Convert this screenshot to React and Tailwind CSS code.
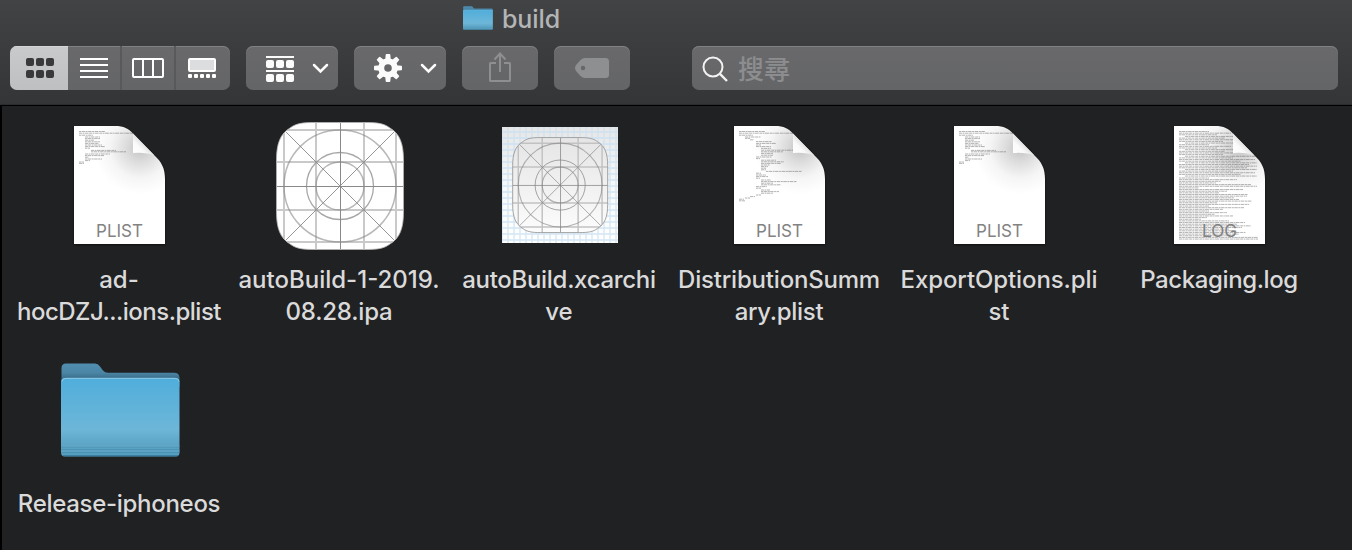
import React from "react";

const BUTTON =
  "h-11 shrink-0 rounded-[7px] bg-linear-to-b from-[#69696b] to-[#646567] shadow-[inset_0_1px_0_#808183]";

function FolderIcon({ className, id }) {
  return (
    <svg viewBox="0 0 119 94" preserveAspectRatio="none" className={className}>
      <defs>
        <linearGradient id={id + "f"} x1="0" y1="0" x2="0" y2="1">
          <stop offset="0" stopColor="#50aedb" />
          <stop offset="0.66" stopColor="#6db6d8" />
          <stop offset="0.86" stopColor="#5ca3c4" />
          <stop offset="1" stopColor="#539dbf" />
        </linearGradient>
        <linearGradient id={id + "b"} x1="0" y1="0" x2="0" y2="1">
          <stop offset="0" stopColor="#508eb0" />
          <stop offset="0.4" stopColor="#4a85a5" />
          <stop offset="0.62" stopColor="#3c6f8b" />
        </linearGradient>
      </defs>
      <path d="M0.5 22V5Q0.5 0.5 5 0.5H34Q37 0.5 39 3.500L42 7.500Q44 9.700 47 9.700H113Q118.500 9.700 118.500 15V24Z" fill={`url(#${id}b)`} />
      <rect x="0" y="15" width="118.500" height="78.500" rx="4" fill={`url(#${id}f)`} />
      <path d="M1 18.500Q1.500 15.300 5 15.300H114Q117.500 15.300 118 18.500" fill="none" stroke="#8ecbe8" strokeWidth="1" />
      <path d="M0 84H118.500M0 86.700H118.500M0 89.400H118.500" stroke="#4689aa" strokeWidth="0.7" />
      <path d="M0 83H118.500M0 88H118.500" stroke="#6fb2d0" strokeWidth="0.6" />
      <path d="M2 92.800H117" stroke="#2f6f90" strokeWidth="0.9" />
    </svg>
  );
}

const PLIST_SHORT = [
  [5, 5.5, 26], [5, 7.2, 54], [5, 9.2, 14],
  [11, 11, 15], [11, 12.6, 15], [11, 14.2, 9], [11, 15.8, 15], [11, 17.4, 14],
  [11, 19, 17], [11, 20.6, 20], [11, 22.2, 5],
  [17, 24.4, 25], [17, 25.8, 35], [11, 28, 25], [11, 29.6, 19], [11, 31.2, 4],
  [11, 33, 17], [11, 34.6, 5], [5, 36, 5], [5, 37.4, 5],
];

const PLIST_LONG = [
  [5, 5.5, 26], [5, 7.2, 54], [5, 9.2, 14], [11, 11, 16], [11, 12.4, 5], [16, 13.8, 4],
  [22, 15.6, 16], [22, 17.4, 20], [22, 19, 5], [22, 20.6, 15], [27, 22.4, 10],
  [27, 24.2, 32], [27, 25.8, 22], [27, 27.4, 12], [27, 29.2, 12], [22, 31, 16],
  [22, 32.6, 4], [27, 34.2, 15], [27, 35.8, 23], [27, 37.4, 20], [27, 39, 9],
  [27, 40.6, 7], [27, 42.2, 5], [27, 43.8, 5], [32, 45.4, 36], [22, 47.2, 5],
  [22, 49, 10], [22, 50.6, 12], [22, 52.2, 4], [27, 54, 10], [27, 55.6, 36],
  [27, 57.2, 12], [27, 58.8, 20], [22, 60.6, 11], [22, 62.2, 5], [27, 64, 9],
  [27, 65.6, 18], [27, 67.2, 12], [22, 69, 5], [16, 70.6, 5], [11, 72, 5], [5, 73.2, 5], [5, 74.8, 6],
];

const LOG_WIDTHS = [30, 52, 38, 53, 46, 54, 44, 53];
const LOG_TAIL = [30, 58, 42, 37, 72, 78, 20, 64, 48, 40, 69, 68, 55, 60, 73, 38, 70, 30, 65, 44, 30, 48, 36, 54, 28, 22, 50, 66, 58, 72, 63, 50, 56, 67, 60, 50, 79, 79];
const LOG = [
  ...Array.from({ length: 28 }, (_, i) => [
    i % 4 === 3 ? 11 : 5,
    5.5 + i * 1.65,
    Math.min(i % 4 === 3 ? 72 : 78, LOG_WIDTHS[i % 8] + (i > 14 ? 24 : 0)),
  ]),
  ...LOG_TAIL.map((w, i) => [5, 52 + i * 1.65, w]),
];

function DocumentIcon({ label, lines, id, opacity }) {
  const shape = "M0 0H41C50 0 54.500 2.500 59 7.500L80 29C88 36 91 43 91 53V118H0Z";
  return (
    <svg viewBox="-18 -4 128 128" className="size-32 overflow-visible">
      <defs>
        <radialGradient id={id + "s"} gradientUnits="userSpaceOnUse" cx="66" cy="22" r="46">
          <stop offset="0" stopColor="#c2c2c2" />
          <stop offset="0.3" stopColor="#dcdcdc" />
          <stop offset="0.65" stopColor="#f5f5f5" />
          <stop offset="1" stopColor="#fff" />
        </radialGradient>
        <linearGradient id={id + "c"} x1="0" y1="1" x2="0.55" y2="0.45">
          <stop offset="0" stopColor="#fff" />
          <stop offset="0.6" stopColor="#fafafa" />
          <stop offset="1" stopColor="#dedede" />
        </linearGradient>
        <clipPath id={id + "p"}>
          <path d={shape} />
        </clipPath>
      </defs>
      <path d={shape} fill={`url(#${id}s)`} className="drop-shadow-[0_1px_1px_rgba(0,0,0,0.6)]" />
      <g clipPath={`url(#${id}p)`} opacity={opacity}>
        {lines.map(([x, y, w], i) => (
          <line
            key={i}
            x1={x}
            x2={x + w}
            y1={y}
            y2={y}
            stroke="#555"
            strokeWidth="0.75"
            strokeDasharray={i % 2 ? "3 .6 1.4 .5 4 .7" : "2 .5 3.5 .6"}
          />
        ))}
      </g>
      <path d="M59 7.500L80.500 29.500Q72 26 59 27Z" fill={`url(#${id}c)`} />
      <text x="45.500" y="111" textAnchor="middle" fontSize="17.800" fill="#828282" className="font-['Inter',sans-serif]" textLength={label === "LOG" ? 35 : 47} lengthAdjust="spacingAndGlyphs">
        {label}
      </text>
    </svg>
  );
}

function Guides({ color, light }) {
  return (
    <g fill="none">
      <path d="M8 0V128M40 0V128M88 0V128M120 0V128M0 8H128M0 40H128M0 88H128M0 120H128" stroke={light} strokeWidth="2" />
      <circle cx="64" cy="64" r="56" stroke={color} strokeOpacity="0.6" strokeWidth="1.500" />
      <circle cx="64" cy="64" r="33.500" stroke={color} strokeOpacity="0.75" strokeWidth="1.300" />
      <circle cx="64" cy="64" r="24" stroke={color} strokeOpacity="0.6" strokeWidth="1.500" />
      <path d="M8 8L120 120M120 8L8 120" stroke={color} strokeWidth="0.9" />
      <path d="M64.500 0V128M0 64.500H128" stroke={color} strokeWidth="1" />
    </g>
  );
}

const SQUIRCLE = "M38 .5H90C102 .5 108 1.500 114 6C124 12 127.500 22 127.500 38V90C127.500 106 124 116 114 122C108 126.500 102 127.500 90 127.500H38C26 127.500 20 126.500 14 122C4 116 .5 106 .5 90V38C.5 22 4 12 14 6C20 1.500 26 .5 38 .5Z";

function AppIcon() {
  return (
    <svg viewBox="0 0 128 128" className="size-32">
      <clipPath id="app"><path d={SQUIRCLE} /></clipPath>
      <g clipPath="url(#app)">
        <rect width="128" height="128" fill="#fff" />
        <Guides color="#888988" light="#c9c9c9" />
      </g>
      <path d={SQUIRCLE} fill="none" stroke="#b5b5b5" strokeWidth="0.8" />
    </svg>
  );
}

function ArchiveIcon() {
  return (
    <svg viewBox="0 0 128 128" className="size-32">
      <defs>
        <linearGradient id="sheet" x1="0" y1="0" x2="0" y2="1">
          <stop offset="0" stopColor="#e6e6e6" />
          <stop offset="0.5" stopColor="#f7f8f8" />
          <stop offset="1" stopColor="#fff" />
        </linearGradient>
        <linearGradient id="tile" x1="0" y1="0" x2="0" y2="1">
          <stop offset="0" stopColor="#e5e5e5" />
          <stop offset="1" stopColor="#fcfcfc" />
        </linearGradient>
        <pattern id="grid" width="6" height="6" patternUnits="userSpaceOnUse" x="5" y="3">
          <path d="M0 1H6M1 0V6" stroke="#c8e0f3" strokeWidth="1.300" />
        </pattern>
        <clipPath id="arc"><path d={SQUIRCLE} /></clipPath>
      </defs>
      <rect x="6" y="5" width="116" height="116" fill="url(#sheet)" />
      <rect x="6" y="5" width="116" height="116" fill="url(#grid)" opacity="0.8" />
      <g transform="translate(16.300 15.200) scale(.748)">
        <path d={SQUIRCLE} fill="url(#tile)" />
        <g clipPath="url(#arc)"><Guides color="#848484" light="#c2c2c2" /></g>
        <path d={SQUIRCLE} fill="none" stroke="#999" strokeWidth="1.200" />
      </g>
    </svg>
  );
}

const ICON = "size-full";

function ViewSwitcher() {
  return (
    <div className={`${BUTTON} flex w-[220px] overflow-hidden`}>
      <div className="w-[58px] bg-linear-to-b from-[#c9cacc] to-[#bebfc1] shadow-[inset_0_1px_0_#d4d5d6]">
        <svg viewBox="0 0 58 44" className={ICON} fill="#39393b">
          {[12, 24].map((y) => [16, 26, 36].map((x) => <rect key={x + "-" + y} x={x} y={y} width="8" height="8" rx="2" />))}
        </svg>
      </div>
      <div className="w-[54px] border-r-2 border-[#58595b]">
        <svg viewBox="0 0 52 44" className={ICON} fill="#fff">
          {[12, 18, 24, 30].map((y) => <rect key={y} x="12" y={y} width="28" height="2" />)}
        </svg>
      </div>
      <div className="w-[54px] border-r-2 border-[#58595b]">
        <svg viewBox="0 0 52 44" className={ICON} fill="none" stroke="#fff" strokeWidth="2">
          <rect x="11" y="13" width="30" height="18" rx="1" />
          <path d="M21 13V31M31 13V31" />
        </svg>
      </div>
      <div className="w-[54px]">
        <svg viewBox="0 0 54 44" className={ICON}>
          <rect x="13" y="13" width="26" height="12" rx="1" fill="#dcddde" stroke="#fff" strokeWidth="2" />
          {[12, 18, 24, 30, 36].map((x) => <rect key={x} x={x} y="28" width="4" height="4" rx="1" fill="#fff" />)}
        </svg>
      </div>
    </div>
  );
}

function Toolbar() {
  return (
    <div className="flex h-11 items-center pr-[14px] pl-[10px]">
      <ViewSwitcher />
      <div className={`${BUTTON} ml-4 w-[92px]`}>
        <svg viewBox="0 0 92 44" className={ICON} fill="#fbfbfb">
          <rect x="20" y="10" width="28" height="2" />
          <rect x="20" y="24" width="28" height="2" />
          {[14, 28].map((y) => [20, 30, 40].map((x) => <rect key={x + "-" + y} x={x} y={y} width="8" height="8" rx="2" />))}
          <path d="M68 19L74.500 25.500L81 19" fill="none" stroke="#fbfbfb" strokeWidth="2.500" strokeLinecap="round" />
        </svg>
      </div>
      <div className={`${BUTTON} ml-4 w-[92px]`}>
        <svg viewBox="0 0 92 44" className={ICON} fill="#fbfbfb">
          <circle cx="34" cy="22" r="6.800" fill="none" stroke="#fbfbfb" strokeWidth="6" />
          {[0, 45, 90, 135, 180, 225, 270, 315].map((a) => (
            <path key={a} d="M31.200 14L31.700 8.700Q31.800 8 32.500 8H35.500Q36.200 8 36.300 8.700L36.800 14Z" transform={`rotate(${a} 34 22)`} />
          ))}
          <path d="M68 19L74.500 25.500L81 19" fill="none" stroke="#fbfbfb" strokeWidth="2.500" strokeLinecap="round" />
        </svg>
      </div>
      <div className={`${BUTTON} ml-4 w-[76px]`}>
        <svg viewBox="0 0 76 44" className={ICON} fill="none" stroke="#8e8f91" strokeWidth="2">
          <path d="M34 17H28.500Q28 17 28 17.500V34.500Q28 35 28.500 35H47.500Q48 35 48 34.500V17.500Q48 17 47.500 17H42" />
          <path d="M38 26V7.500M32.500 13.500L38 7.500L43.500 13.500" />
        </svg>
      </div>
      <div className={`${BUTTON} ml-4 w-[76px]`}>
        <svg viewBox="0 0 76 44" className={ICON}>
          <path fillRule="evenodd" fill="#8e8f91" d="M31 12H51.500Q55 12 55 15.500V28.500Q55 32 51.500 32H31Q28.500 32 26.500 30L22.500 25.500Q19.500 22 22.500 18.500L26.500 14Q28.500 12 31 12ZM29 19.800A2.200 2.200 0 1 0 29 24.200A2.200 2.200 0 1 0 29 19.800Z" />
        </svg>
      </div>
      <div className={`${BUTTON} ml-[62px] flex flex-1 items-center`}>
        <svg viewBox="0 0 44 44" className="size-11" fill="none" stroke="#f2f2f2" strokeWidth="2">
          <circle cx="21" cy="21" r="9.500" />
          <path d="M27.700 27.700L35 35" strokeWidth="2.400" />
        </svg>
        <span className="ml-[2px] font-['Noto_Sans_CJK_TC',sans-serif] text-[26px] leading-[44px] font-medium text-[#8c8d8f]">搜尋</span>
      </div>
    </div>
  );
}

function File({ icon, lines }) {
  return (
    <div className="flex h-56 flex-col items-center">
      <div className="flex size-32 items-center justify-center">{icon}</div>
      <div className="mt-[14px] pr-[2px] text-center text-[24px] leading-8 font-medium whitespace-nowrap text-[#dadada]">
        {lines.map(([text, tracking]) => (
          <div key={text} className={tracking}>{text}</div>
        ))}
      </div>
    </div>
  );
}

export default function App() {
  return (
    <div className="flex h-[550px] w-[1352px] flex-col overflow-hidden bg-[#202123] font-['Inter',sans-serif]">
      <header className="h-[106px] shrink-0 border-b border-black bg-linear-to-b from-[#424345] to-[#343537] shadow-[inset_0_-1px_0_#2b2c2e]">
        <div className="flex h-[46px] items-start pt-[6px] pl-[463px]">
          <FolderIcon id="small" className="h-6 w-[30px]" />
          <span className="ml-[9px] text-[25px] leading-[26px] font-medium tracking-[-0.1px] text-[#b4b5b6]">build</span>
        </div>
        <Toolbar />
      </header>
      <main className="grid flex-1 auto-rows-[224px] grid-cols-[repeat(6,220px)] content-start border-l-2 border-black pt-4 pl-2">
        <File icon={<DocumentIcon id="d1" label="PLIST" lines={PLIST_SHORT} opacity="0.6" />} lines={[["ad-", ""], ["hocDZJ...ions.plist", "tracking-[-0.5px]"]]} />
        <File icon={<AppIcon />} lines={[["autoBuild-1-2019.", ""], ["08.28.ipa", "tracking-[-0.2px]"]]} />
        <File icon={<ArchiveIcon />} lines={[["autoBuild.xcarchi", "tracking-[-0.3px]"], ["ve", ""]]} />
        <File icon={<DocumentIcon id="d2" label="PLIST" lines={PLIST_LONG} opacity="0.6" />} lines={[["DistributionSumm", "tracking-[-0.2px]"], ["ary.plist", "tracking-[-0.3px]"]]} />
        <File icon={<DocumentIcon id="d3" label="PLIST" lines={PLIST_SHORT} opacity="0.6" />} lines={[["ExportOptions.pli", "tracking-[-0.1px]"], ["st", ""]]} />
        <File icon={<DocumentIcon id="d4" label="LOG" lines={LOG} opacity="0.6" />} lines={[["Packaging.log", "tracking-[-0.4px]"]]} />
        <File icon={<FolderIcon id="large" className="-mt-[1px] h-[94px] w-[119px]" />} lines={[["Release-iphoneos", "tracking-[-0.3px]"]]} />
      </main>
    </div>
  );
}
